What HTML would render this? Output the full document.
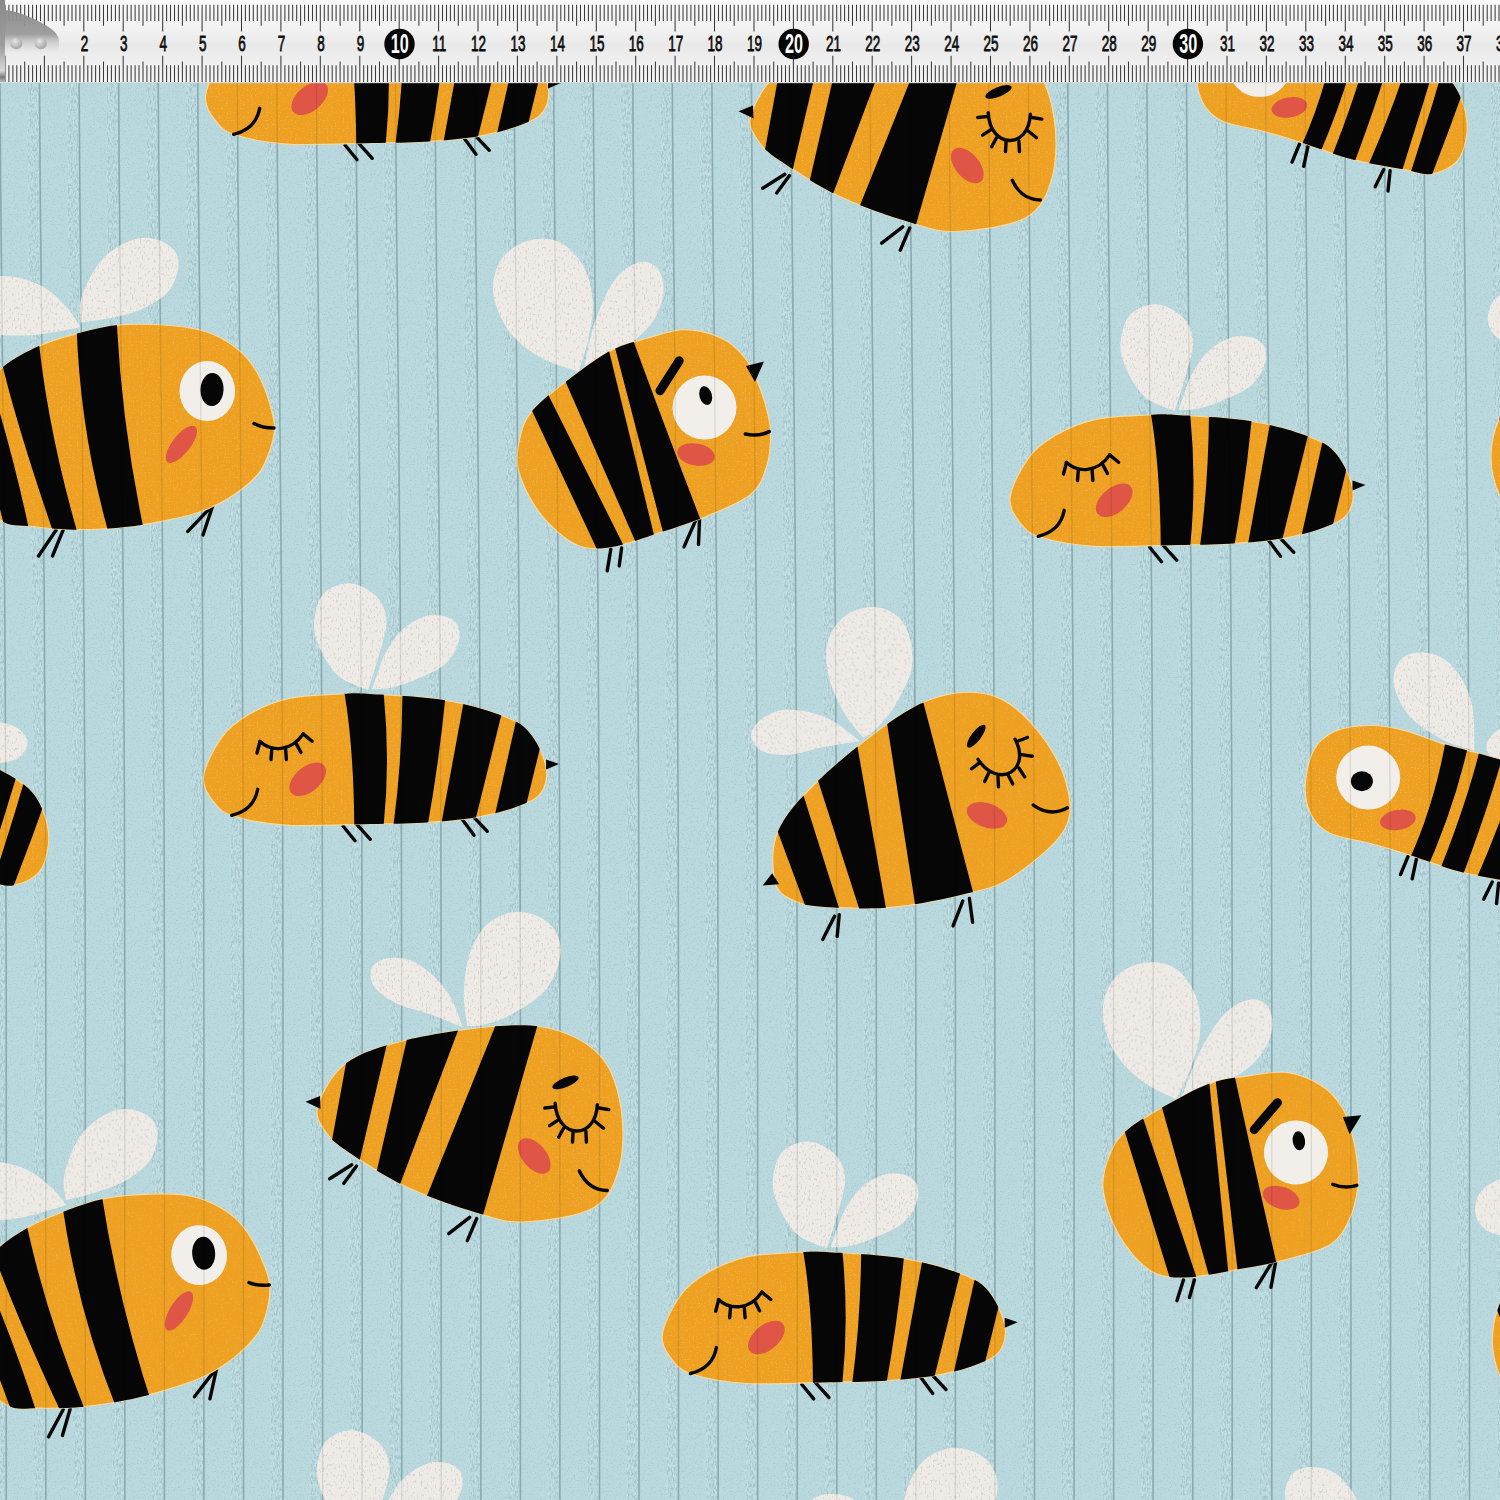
<!DOCTYPE html>
<html><head><meta charset="utf-8"><title>Bee fabric</title>
<style>html,body{margin:0;padding:0;width:1500px;height:1500px;overflow:hidden;background:#BAD9DE}
svg{display:block}</style></head><body><svg width="1500" height="1500" viewBox="0 0 1500 1500"><defs><filter id="spk" x="-2000" y="-2000" width="6000" height="6000" filterUnits="userSpaceOnUse"><feTurbulence type="fractalNoise" baseFrequency="0.75" numOctaves="1" seed="23" result="n"/><feColorMatrix in="n" type="matrix" values="0 0 0 0 0  0 0 0 0 0  0 0 0 0 0  0 0 0 10 -6.0" result="a"/><feComposite in="SourceGraphic" in2="a" operator="in"/></filter><filter id="spk2" x="-2000" y="-2000" width="6000" height="6000" filterUnits="userSpaceOnUse"><feTurbulence type="fractalNoise" baseFrequency="0.5 0.3" numOctaves="2" seed="31" result="n"/><feColorMatrix in="n" type="matrix" values="0 0 0 0 0  0 0 0 0 0  0 0 0 0 0  0 0 0 9 -5.4" result="a"/><feComposite in="SourceGraphic" in2="a" operator="in"/></filter><clipPath id="clip_t1"><path d="M203.7 776C205.1 765.4 214.3 747.5 221.7 737.3C229.1 727.1 237.2 721.1 248.3 714.7C259.4 708.3 272.7 702.2 288.3 698.7C303.9 695.2 328.1 694.8 341.7 694C355.3 693.2 353.1 693 370 694C386.9 695 421.1 696.3 443.3 700C465.5 703.7 488.9 710.5 503.3 716C517.8 721.5 522.9 724.8 530 733.3C537.1 741.8 544.2 756.7 546 766.7C547.8 776.7 545.6 786.6 540.7 793.3C535.8 800 527.4 802.7 516.7 806.7C506 810.7 492.3 814.6 476.7 817.3C461.1 820 441.1 821.6 423.3 822.7C405.5 823.8 392.5 823.6 370 824C347.5 824.4 311 826.6 288.3 825.3C265.6 824 246.2 820 233.7 816C221.1 812 218 807.7 213 801C208 794.3 202.2 786.6 203.7 776Z"/></clipPath><clipPath id="wclip_t1"><path d="M368 690C363.2 687.8 347.2 683.4 339.3 676.7C331.4 670 324.9 658.9 320.7 650C316.5 641.1 313.6 632.6 314 623.3C314.4 614 317.3 600.7 323.3 594C329.3 587.3 341.1 582.8 350 583.3C358.9 583.8 370.6 590.4 376.7 596.7C382.8 603 386.1 611.3 386.5 621C386.9 630.7 381.6 645 379 655C376.4 665 372.8 675.2 371 681C369.2 686.8 368.5 688.5 368 690Z"/><path d="M372 689C373 686.2 375.7 678.2 378 672C380.3 665.8 381.8 659.2 386 652C390.2 644.8 396 634.8 403.3 628.7C410.6 622.6 421.6 616.6 430 615.3C438.4 614 449.1 616.7 454 620.7C458.9 624.7 460.6 632.2 459.3 639.3C458 646.4 453.1 656.6 446 663.3C438.9 670 426 675.2 416.7 679.3C407.4 683.4 397.4 686.4 390 688C382.6 689.6 375 688.8 372 689Z"/></clipPath><g id="t1"><path d="M368 690C363.2 687.8 347.2 683.4 339.3 676.7C331.4 670 324.9 658.9 320.7 650C316.5 641.1 313.6 632.6 314 623.3C314.4 614 317.3 600.7 323.3 594C329.3 587.3 341.1 582.8 350 583.3C358.9 583.8 370.6 590.4 376.7 596.7C382.8 603 386.1 611.3 386.5 621C386.9 630.7 381.6 645 379 655C376.4 665 372.8 675.2 371 681C369.2 686.8 368.5 688.5 368 690Z" fill="#EEEAE6"/><path d="M372 689C373 686.2 375.7 678.2 378 672C380.3 665.8 381.8 659.2 386 652C390.2 644.8 396 634.8 403.3 628.7C410.6 622.6 421.6 616.6 430 615.3C438.4 614 449.1 616.7 454 620.7C458.9 624.7 460.6 632.2 459.3 639.3C458 646.4 453.1 656.6 446 663.3C438.9 670 426 675.2 416.7 679.3C407.4 683.4 397.4 686.4 390 688C382.6 689.6 375 688.8 372 689Z" fill="#EEEAE6"/><g clip-path="url(#wclip_t1)"><rect x="-2000" y="-2000" width="6000" height="6000" fill="#a09a96" filter="url(#spk2)" opacity="0.25"/></g><path d="M343 826 L355 840.7M357 824.7 L370.3 839.3M460.7 817.3 L474 835.3M472.7 816 L487.3 831.3" stroke="#070606" stroke-width="3.4" stroke-linecap="round" fill="none"/><path d="M203.7 776C205.1 765.4 214.3 747.5 221.7 737.3C229.1 727.1 237.2 721.1 248.3 714.7C259.4 708.3 272.7 702.2 288.3 698.7C303.9 695.2 328.1 694.8 341.7 694C355.3 693.2 353.1 693 370 694C386.9 695 421.1 696.3 443.3 700C465.5 703.7 488.9 710.5 503.3 716C517.8 721.5 522.9 724.8 530 733.3C537.1 741.8 544.2 756.7 546 766.7C547.8 776.7 545.6 786.6 540.7 793.3C535.8 800 527.4 802.7 516.7 806.7C506 810.7 492.3 814.6 476.7 817.3C461.1 820 441.1 821.6 423.3 822.7C405.5 823.8 392.5 823.6 370 824C347.5 824.4 311 826.6 288.3 825.3C265.6 824 246.2 820 233.7 816C221.1 812 218 807.7 213 801C208 794.3 202.2 786.6 203.7 776Z" fill="#EDA021" stroke="#f6d9a0" stroke-width="1.2"/><path d="M546 759.5 L559 764 L546 769.5 Z" fill="#070606"/><g clip-path="url(#clip_t1)"><rect x="-2000" y="-2000" width="6000" height="6000" fill="#ffe0a0" filter="url(#spk)" opacity="0.22"/><path d="M339.7 669.1Q355 735 354.3 848.9L381 847.7Q393 761.3 381 669.7Z" fill="#070606"/><path d="M402.4 669.8Q403.6 761.3 390.3 847.6L423.9 846.1Q440.4 759.4 447.4 675.2Z" fill="#070606"/><path d="M467.8 679.4L437.5 844.6L470.7 839L507.3 691Z" fill="#070606"/><path d="M520.8 699.6L489.8 837.7L521.4 824.3L546.6 721Z" fill="#070606"/></g><path d="M259.8 741.3 C271 752 291 752 303.2 733.9" stroke="#070606" stroke-width="3.4" fill="none" stroke-linecap="round"/><path d="M259.8 742.3 L257 753M271.9 748 L271 759.5M285.5 748.5 L286.4 759.5M296.7 744.4 L300.9 752.5M303.2 733.9 L312.1 741.3" stroke="#070606" stroke-width="3.4" stroke-linecap="round" fill="none"/><ellipse cx="307.7" cy="779.3" rx="21.5" ry="12.5" transform="rotate(-40 307.7 779.3)" fill="#DF5546"/><path d="M257.7 789.3 Q254 810 231.7 815.3" stroke="#070606" stroke-width="3.4" fill="none" stroke-linecap="round"/></g><clipPath id="clip_t2"><path d="M318 1105.3C314.5 1116.6 319.9 1123.2 325 1131C330.1 1138.8 334.7 1142.7 348.3 1152C361.9 1161.3 385.3 1176.9 406.7 1187C428.1 1197.1 457.3 1206.9 476.7 1212.7C496.1 1218.5 503.9 1222.8 523.3 1222C542.7 1221.2 577.3 1217 593.3 1208C609.2 1199 614.3 1184.6 619 1168.3C623.7 1152 624 1128.3 621.3 1110C618.6 1091.7 613.2 1071.9 602.7 1058.7C592.2 1045.5 575.4 1036.2 558.3 1030.7C541.2 1025.2 525.3 1024.5 500 1026C474.7 1027.5 432.4 1033.8 406.7 1040C381 1046.2 360.8 1052.4 346 1063.3C331.2 1074.2 321.5 1094 318 1105.3Z"/></clipPath><clipPath id="wclip_t2"><path d="M462.7 1027.2C457.2 1025 441.3 1018.4 430 1014.3C418.7 1010.2 404.3 1007.4 395 1002.7C385.7 998 377.9 992.1 374 986.3C370.1 980.5 369.4 972.4 371.7 967.7C374 963 381.4 959.5 388 958.3C394.6 957.1 403.5 957.6 411.3 960.7C419.1 963.8 428.1 970.8 434.7 977C441.3 983.2 446.3 989.6 451 998C455.7 1006.4 460.8 1022.3 462.7 1027.2Z"/><path d="M467.3 1026C466.7 1020.5 463.4 1005.3 463.8 993.3C464.2 981.2 465.6 965.4 469.7 953.7C473.8 942 480.1 930.3 488.3 923.3C496.5 916.3 508.6 911.7 518.7 911.7C528.8 911.7 542 916.7 549 923.3C556 929.9 561.1 940.4 560.7 951.3C560.3 962.2 554.9 978.2 546.7 988.7C538.5 999.2 522.2 1008.3 511.7 1014.3C501.2 1020.3 491.1 1022.8 483.7 1024.8C476.3 1026.8 470 1025.8 467.3 1026Z"/></clipPath><g id="t2"><path d="M462.7 1027.2C457.2 1025 441.3 1018.4 430 1014.3C418.7 1010.2 404.3 1007.4 395 1002.7C385.7 998 377.9 992.1 374 986.3C370.1 980.5 369.4 972.4 371.7 967.7C374 963 381.4 959.5 388 958.3C394.6 957.1 403.5 957.6 411.3 960.7C419.1 963.8 428.1 970.8 434.7 977C441.3 983.2 446.3 989.6 451 998C455.7 1006.4 460.8 1022.3 462.7 1027.2Z" fill="#EEEAE6"/><path d="M467.3 1026C466.7 1020.5 463.4 1005.3 463.8 993.3C464.2 981.2 465.6 965.4 469.7 953.7C473.8 942 480.1 930.3 488.3 923.3C496.5 916.3 508.6 911.7 518.7 911.7C528.8 911.7 542 916.7 549 923.3C556 929.9 561.1 940.4 560.7 951.3C560.3 962.2 554.9 978.2 546.7 988.7C538.5 999.2 522.2 1008.3 511.7 1014.3C501.2 1020.3 491.1 1022.8 483.7 1024.8C476.3 1026.8 470 1025.8 467.3 1026Z" fill="#EEEAE6"/><g clip-path="url(#wclip_t2)"><rect x="-2000" y="-2000" width="6000" height="6000" fill="#a09a96" filter="url(#spk2)" opacity="0.25"/></g><path d="M351.8 1164.8 L329.7 1178.8M356.5 1166 L343.7 1183.5M469.7 1217.3 L448.7 1233.7M476.7 1218.5 L467.3 1240.7" stroke="#070606" stroke-width="3.4" stroke-linecap="round" fill="none"/><path d="M318 1105.3C314.5 1116.6 319.9 1123.2 325 1131C330.1 1138.8 334.7 1142.7 348.3 1152C361.9 1161.3 385.3 1176.9 406.7 1187C428.1 1197.1 457.3 1206.9 476.7 1212.7C496.1 1218.5 503.9 1222.8 523.3 1222C542.7 1221.2 577.3 1217 593.3 1208C609.2 1199 614.3 1184.6 619 1168.3C623.7 1152 624 1128.3 621.3 1110C618.6 1091.7 613.2 1071.9 602.7 1058.7C592.2 1045.5 575.4 1036.2 558.3 1030.7C541.2 1025.2 525.3 1024.5 500 1026C474.7 1027.5 432.4 1033.8 406.7 1040C381 1046.2 360.8 1052.4 346 1063.3C331.2 1074.2 321.5 1094 318 1105.3Z" fill="#EDA021" stroke="#f6d9a0" stroke-width="1.2"/><path d="M320 1096 L305.5 1101.8 L320.5 1109 Z" fill="#070606"/><g clip-path="url(#clip_t2)"><rect x="-2000" y="-2000" width="6000" height="6000" fill="#ffe0a0" filter="url(#spk)" opacity="0.22"/><path d="M350.5 1038.7L327.5 1164.9L354.3 1183.3L391.4 1025Z" fill="#070606"/><path d="M412.3 1015.6L370.7 1197.4L390.9 1208.4L466.8 1007.3Z" fill="#070606"/><path d="M504.6 1002.8L418.4 1217.2L476.8 1236.7L544.2 1002Z" fill="#070606"/></g><ellipse cx="565.5" cy="1082.4" rx="14" ry="4.8" transform="rotate(-22 565.5 1082.4)" fill="#070606"/><path d="M555.2 1103.2 C557 1140 596 1140 597.3 1104.8" stroke="#070606" stroke-width="3.4" fill="none" stroke-linecap="round"/><path d="M544.8 1108 L554.9 1106.9M549.6 1125.6 L557.6 1120.3M558.7 1137.3 L563.5 1128.3M572.5 1142.1 L573.1 1132M586.4 1142.1 L585.9 1131.5M603.5 1128.3 L594.9 1121.3M608.8 1109.6 L599.2 1108" stroke="#070606" stroke-width="3.4" stroke-linecap="round" fill="none"/><ellipse cx="534.3" cy="1156" rx="21" ry="12" transform="rotate(50 534.3 1156)" fill="#DF5546"/><path d="M579.3 1170.7 Q588 1190 607.3 1190.5" stroke="#070606" stroke-width="3.4" fill="none" stroke-linecap="round"/></g><clipPath id="clip_t4"><path d="M648 338C660 334.6 671.8 329.6 684 329.6C696.2 329.6 710.8 333.3 721 338C731.2 342.7 738.6 349.9 745 358C751.4 366.1 755.7 377.2 759.5 386.7C763.3 396.1 766.1 406.6 768 414.7C769.9 422.8 770.9 426.6 770.7 435C770.5 443.4 770.2 455.5 767 465.3C763.8 475.1 761.1 485.6 751.3 494C741.5 502.4 723.2 509.3 708 515.7C692.8 522.1 676 527.3 660 532.5C644 537.7 626 544.9 612 546.9C598 548.9 588 550.1 576 544.5C564 538.9 549.6 525.7 540 513.3C530.4 500.9 521.6 483.2 518.4 470C515.2 456.8 518 444.4 520.8 434C523.6 423.6 526 417.6 535.2 407.6C544.4 397.6 563.2 383.6 576 374C588.8 364.4 600 356 612 350C624 344 636 341.4 648 338Z"/></clipPath><clipPath id="wclip_t4"><path d="M578.4 371.6C572 369.2 551.6 364 540 357.2C528.4 350.4 516.6 341.6 508.8 330.8C501 320 494.4 304.4 493.2 292.4C492 280.4 495.8 267.4 501.6 258.8C507.4 250.2 518.4 243.6 528 240.8C537.6 238 550 237.8 559.2 242C568.4 246.2 577.6 256 583.2 266C588.8 276 592 289.6 592.8 302C593.6 314.4 590.4 328.8 588 340.4C585.6 352 580 366.4 578.4 371.6Z"/><path d="M583.2 371.6C585.2 363.2 590 336.4 595.2 321.2C600.4 306 607.2 290.2 614.4 280.4C621.6 270.6 631.2 264.4 638.4 262.4C645.6 260.4 653.4 263.4 657.6 268.4C661.8 273.4 664.4 283.6 663.6 292.4C662.8 301.2 658.6 312.4 652.8 321.2C647 330 637.6 338 628.8 345.2C620 352.4 607.6 360 600 364.4C592.4 368.8 586 370.4 583.2 371.6Z"/></clipPath><g id="t4"><path d="M578.4 371.6C572 369.2 551.6 364 540 357.2C528.4 350.4 516.6 341.6 508.8 330.8C501 320 494.4 304.4 493.2 292.4C492 280.4 495.8 267.4 501.6 258.8C507.4 250.2 518.4 243.6 528 240.8C537.6 238 550 237.8 559.2 242C568.4 246.2 577.6 256 583.2 266C588.8 276 592 289.6 592.8 302C593.6 314.4 590.4 328.8 588 340.4C585.6 352 580 366.4 578.4 371.6Z" fill="#EEEAE6"/><path d="M583.2 371.6C585.2 363.2 590 336.4 595.2 321.2C600.4 306 607.2 290.2 614.4 280.4C621.6 270.6 631.2 264.4 638.4 262.4C645.6 260.4 653.4 263.4 657.6 268.4C661.8 273.4 664.4 283.6 663.6 292.4C662.8 301.2 658.6 312.4 652.8 321.2C647 330 637.6 338 628.8 345.2C620 352.4 607.6 360 600 364.4C592.4 368.8 586 370.4 583.2 371.6Z" fill="#EEEAE6"/><g clip-path="url(#wclip_t4)"><rect x="-2000" y="-2000" width="6000" height="6000" fill="#a09a96" filter="url(#spk2)" opacity="0.25"/></g><path d="M610.8 549.3 L607.2 570.9M621.6 548 L619.2 566M697.2 516.9 L684 546.9M699.7 515.7 L698.5 544.5" stroke="#070606" stroke-width="3.4" stroke-linecap="round" fill="none"/><path d="M648 338C660 334.6 671.8 329.6 684 329.6C696.2 329.6 710.8 333.3 721 338C731.2 342.7 738.6 349.9 745 358C751.4 366.1 755.7 377.2 759.5 386.7C763.3 396.1 766.1 406.6 768 414.7C769.9 422.8 770.9 426.6 770.7 435C770.5 443.4 770.2 455.5 767 465.3C763.8 475.1 761.1 485.6 751.3 494C741.5 502.4 723.2 509.3 708 515.7C692.8 522.1 676 527.3 660 532.5C644 537.7 626 544.9 612 546.9C598 548.9 588 550.1 576 544.5C564 538.9 549.6 525.7 540 513.3C530.4 500.9 521.6 483.2 518.4 470C515.2 456.8 518 444.4 520.8 434C523.6 423.6 526 417.6 535.2 407.6C544.4 397.6 563.2 383.6 576 374C588.8 364.4 600 356 612 350C624 344 636 341.4 648 338Z" fill="#EDA021" stroke="#f6d9a0" stroke-width="1.2"/><path d="M746 366 L764 361.5 L755 382 Z" fill="#070606"/><g clip-path="url(#clip_t4)"><rect x="-2000" y="-2000" width="6000" height="6000" fill="#ffe0a0" filter="url(#spk)" opacity="0.22"/><path d="M521.1 387.5L607.3 571.4L633.8 566L537.8 373.9Z" fill="#070606"/><path d="M556.4 360.7L643.6 560.3L659.7 558.3L603.8 329.5Z" fill="#070606"/><path d="M609.3 325.8L668.7 554.2L706 534Q662.4 420.5 626 320.9Z" fill="#070606"/></g><path d="M660 390.8 L679.2 360.8" stroke="#070606" stroke-width="9" stroke-linecap="round" fill="none"/><circle cx="704.5" cy="407.6" r="32" fill="#F2EFEA"/><ellipse cx="705.7" cy="395.6" rx="6.2" ry="9.6" transform="rotate(-15 705.7 395.6)" fill="#070606"/><ellipse cx="696" cy="454.5" rx="19" ry="11" transform="rotate(10 696 454.5)" fill="#DF5546"/><path d="M745.3 434 Q758 437 769.3 431.6" stroke="#070606" stroke-width="3.4" fill="none" stroke-linecap="round"/></g><clipPath id="clip_t3"><path d="M-36 446C-36 432.8 -33 418.7 -27 406C-21 393.3 -11.2 379.7 0 369.6C11.2 359.5 26.7 351.7 40 345.6C53.3 339.5 66.7 336.3 80 332.8C93.3 329.3 106.1 326.1 120 324.8C133.9 323.5 150 324.1 163.3 325C176.6 325.9 189.6 327.3 200 330C210.4 332.7 218.2 336.3 226 341C233.8 345.7 241.2 351.5 247 358C252.8 364.5 257 371.7 261 380C265 388.3 268.8 400 271 408C273.2 416 274.7 421 274.5 428C274.3 435 272.6 442.5 270 450C267.4 457.5 265.1 465.4 259 473C252.9 480.6 243.1 488.8 233.3 495.3C223.5 501.8 211.7 507.7 200 512C188.3 516.3 175 518.6 163.3 521C151.6 523.4 143.9 525 130 526.5C116.1 528 96.3 529.7 80 529.7C63.7 529.7 45.3 528.1 32 526.5C18.7 524.9 9.8 526.9 0 520C-9.8 513.1 -21 497.3 -27 485C-33 472.7 -36 459.2 -36 446Z"/></clipPath><clipPath id="wclip_t3"><path d="M80.5 322.6C80.7 318.3 78.3 307.1 81.6 297C84.8 286.9 92.8 271 100 262C107.2 253 116.7 247 125 243C133.3 239 142.2 237.2 150 238C157.8 238.8 167.2 243.3 172 248C176.8 252.7 179.2 258.7 178.5 266C177.8 273.3 174.4 284.7 168 292C161.6 299.3 149.7 305.7 140 310C130.3 314.3 119.9 315.9 110 318C100.1 320.1 85.4 321.8 80.5 322.6Z"/><path d="M80.5 327.3C78.4 324.2 73.6 315.2 67.7 308.6C61.8 302.1 53.8 293.3 45 288C36.2 282.7 25 278.7 15 277C5 275.3 -6.7 275.5 -15 278C-23.3 280.5 -31.2 285.8 -35 292C-38.8 298.2 -40.5 308.3 -38 315C-35.5 321.7 -30.2 328.6 -20 332C-9.8 335.4 10.8 335.5 23.3 335.5C35.8 335.5 45.5 333.4 55 332C64.5 330.6 76.2 328.1 80.5 327.3Z"/></clipPath><g id="t3"><path d="M80.5 322.6C80.7 318.3 78.3 307.1 81.6 297C84.8 286.9 92.8 271 100 262C107.2 253 116.7 247 125 243C133.3 239 142.2 237.2 150 238C157.8 238.8 167.2 243.3 172 248C176.8 252.7 179.2 258.7 178.5 266C177.8 273.3 174.4 284.7 168 292C161.6 299.3 149.7 305.7 140 310C130.3 314.3 119.9 315.9 110 318C100.1 320.1 85.4 321.8 80.5 322.6Z" fill="#EEEAE6"/><path d="M80.5 327.3C78.4 324.2 73.6 315.2 67.7 308.6C61.8 302.1 53.8 293.3 45 288C36.2 282.7 25 278.7 15 277C5 275.3 -6.7 275.5 -15 278C-23.3 280.5 -31.2 285.8 -35 292C-38.8 298.2 -40.5 308.3 -38 315C-35.5 321.7 -30.2 328.6 -20 332C-9.8 335.4 10.8 335.5 23.3 335.5C35.8 335.5 45.5 333.4 55 332C64.5 330.6 76.2 328.1 80.5 327.3Z" fill="#EEEAE6"/><g clip-path="url(#wclip_t3)"><rect x="-2000" y="-2000" width="6000" height="6000" fill="#a09a96" filter="url(#spk2)" opacity="0.25"/></g><path d="M56 530.3 L38.5 556M63 530.3 L52.5 556M211 507 L187.8 531.4M213.5 503.4 L203 535" stroke="#070606" stroke-width="3.4" stroke-linecap="round" fill="none"/><path d="M-36 446C-36 432.8 -33 418.7 -27 406C-21 393.3 -11.2 379.7 0 369.6C11.2 359.5 26.7 351.7 40 345.6C53.3 339.5 66.7 336.3 80 332.8C93.3 329.3 106.1 326.1 120 324.8C133.9 323.5 150 324.1 163.3 325C176.6 325.9 189.6 327.3 200 330C210.4 332.7 218.2 336.3 226 341C233.8 345.7 241.2 351.5 247 358C252.8 364.5 257 371.7 261 380C265 388.3 268.8 400 271 408C273.2 416 274.7 421 274.5 428C274.3 435 272.6 442.5 270 450C267.4 457.5 265.1 465.4 259 473C252.9 480.6 243.1 488.8 233.3 495.3C223.5 501.8 211.7 507.7 200 512C188.3 516.3 175 518.6 163.3 521C151.6 523.4 143.9 525 130 526.5C116.1 528 96.3 529.7 80 529.7C63.7 529.7 45.3 528.1 32 526.5C18.7 524.9 9.8 526.9 0 520C-9.8 513.1 -21 497.3 -27 485C-33 472.7 -36 459.2 -36 446Z" fill="#EDA021" stroke="#f6d9a0" stroke-width="1.2"/><g clip-path="url(#clip_t3)"><rect x="-2000" y="-2000" width="6000" height="6000" fill="#ffe0a0" filter="url(#spk)" opacity="0.22"/><path d="M-35.5 380.9Q-9.5 467.5 10.5 552.1L33.4 552.2Q18.4 471 -14.2 365.8Z" fill="#070606"/><path d="M-2.4 344.1Q12.8 416 60 551.9L83.3 552.5Q45.6 428 36.7 319.5Z" fill="#070606"/><path d="M76.1 308.1Q77.8 433.6 114.4 552.7L147.8 548.1Q120.2 425.9 115.8 300.2Z" fill="#070606"/></g><ellipse cx="207.3" cy="391" rx="27.8" ry="30" transform="rotate(0 207.3 391)" fill="#F2EFEA"/><ellipse cx="212" cy="389.6" rx="11.5" ry="16.5" transform="rotate(3 212 389.6)" fill="#070606"/><ellipse cx="181.4" cy="444.3" rx="22.5" ry="9" transform="rotate(-52 181.4 444.3)" fill="#DF5546"/><path d="M254 423.5 Q262 428 274 428" stroke="#070606" stroke-width="3.4" fill="none" stroke-linecap="round"/></g><clipPath id="clip_t5"><path d="M1196.7 74C1196.4 84.8 1198.8 95.2 1203 103C1207.2 110.8 1212.2 116.3 1222 121C1231.8 125.7 1248.8 127.4 1262 131C1275.2 134.6 1286.2 137.8 1301 142.5C1315.8 147.2 1333.5 154.5 1350.7 159C1367.9 163.5 1390.5 167.1 1404 169.6C1417.5 172.1 1422.8 175.3 1431.7 173.9C1440.6 172.5 1451.4 167.8 1457.3 161C1463.2 154.2 1465.8 142.5 1466.9 133.3C1468 124.1 1466.5 114.5 1463.7 105.6C1460.9 96.7 1456.5 87.3 1450 80C1443.5 72.7 1434.8 67.5 1425 62C1415.2 56.5 1406.8 52.3 1391.5 47.1C1376.2 41.9 1349.2 35.7 1333.5 30.9C1317.8 26.1 1309.4 21.3 1297.5 18.3C1285.6 15.3 1273.9 12.9 1262 13C1250.1 13.1 1235.5 14.8 1226 19C1216.5 23.2 1209.9 28.8 1205 38C1200.1 47.2 1197 63.2 1196.7 74Z"/></clipPath><clipPath id="wclip_t5"><path d="M1366 38C1360.8 36.2 1345.5 33.1 1334.8 27.5C1324 21.9 1309.7 13.3 1301.5 4.2C1293.3 -4.9 1287.4 -18 1285.5 -27C1283.6 -36 1286.6 -44.6 1290 -50C1293.4 -55.4 1299.1 -58.5 1306 -59.5C1312.9 -60.5 1323.8 -59.8 1331.5 -55.8C1339.2 -51.8 1346.6 -44.3 1352 -35.8C1357.4 -27.3 1361.7 -17.3 1364 -5C1366.3 7.3 1365.7 30.8 1366 38Z"/><path d="M1378 32C1379 26.8 1385.3 19.5 1392 16C1398.7 12.5 1410.3 10.7 1418 11C1425.7 11.3 1433.3 14.5 1438 18C1442.7 21.5 1446.3 27.2 1446 32C1445.7 36.8 1442 43.7 1436 47C1430 50.3 1418.3 52 1410 52C1401.7 52 1391.3 50.3 1386 47C1380.7 43.7 1377 37.2 1378 32Z"/></clipPath><g id="t5"><path d="M1366 38C1360.8 36.2 1345.5 33.1 1334.8 27.5C1324 21.9 1309.7 13.3 1301.5 4.2C1293.3 -4.9 1287.4 -18 1285.5 -27C1283.6 -36 1286.6 -44.6 1290 -50C1293.4 -55.4 1299.1 -58.5 1306 -59.5C1312.9 -60.5 1323.8 -59.8 1331.5 -55.8C1339.2 -51.8 1346.6 -44.3 1352 -35.8C1357.4 -27.3 1361.7 -17.3 1364 -5C1366.3 7.3 1365.7 30.8 1366 38Z" fill="#EEEAE6"/><path d="M1378 32C1379 26.8 1385.3 19.5 1392 16C1398.7 12.5 1410.3 10.7 1418 11C1425.7 11.3 1433.3 14.5 1438 18C1442.7 21.5 1446.3 27.2 1446 32C1445.7 36.8 1442 43.7 1436 47C1430 50.3 1418.3 52 1410 52C1401.7 52 1391.3 50.3 1386 47C1380.7 43.7 1377 37.2 1378 32Z" fill="#EEEAE6"/><g clip-path="url(#wclip_t5)"><rect x="-2000" y="-2000" width="6000" height="6000" fill="#a09a96" filter="url(#spk2)" opacity="0.25"/></g><path d="M1299.5 144 L1292 162.1M1308 146.1 L1303.7 166.4M1383.7 169.6 L1375.2 186.7M1390.1 170.7 L1388 191" stroke="#070606" stroke-width="3.4" stroke-linecap="round" fill="none"/><path d="M1196.7 74C1196.4 84.8 1198.8 95.2 1203 103C1207.2 110.8 1212.2 116.3 1222 121C1231.8 125.7 1248.8 127.4 1262 131C1275.2 134.6 1286.2 137.8 1301 142.5C1315.8 147.2 1333.5 154.5 1350.7 159C1367.9 163.5 1390.5 167.1 1404 169.6C1417.5 172.1 1422.8 175.3 1431.7 173.9C1440.6 172.5 1451.4 167.8 1457.3 161C1463.2 154.2 1465.8 142.5 1466.9 133.3C1468 124.1 1466.5 114.5 1463.7 105.6C1460.9 96.7 1456.5 87.3 1450 80C1443.5 72.7 1434.8 67.5 1425 62C1415.2 56.5 1406.8 52.3 1391.5 47.1C1376.2 41.9 1349.2 35.7 1333.5 30.9C1317.8 26.1 1309.4 21.3 1297.5 18.3C1285.6 15.3 1273.9 12.9 1262 13C1250.1 13.1 1235.5 14.8 1226 19C1216.5 23.2 1209.9 28.8 1205 38C1200.1 47.2 1197 63.2 1196.7 74Z" fill="#EDA021" stroke="#f6d9a0" stroke-width="1.2"/><g clip-path="url(#clip_t5)"><rect x="-2000" y="-2000" width="6000" height="6000" fill="#ffe0a0" filter="url(#spk)" opacity="0.22"/><path d="M1340.7 7Q1327.6 96.6 1291.7 165.8L1311.7 171.6Q1349.5 89.7 1363.3 15Z" fill="#070606"/><path d="M1375.3 19.8Q1361.5 84.9 1323.7 176.4L1346.5 183.6Q1386.1 79.5 1399.3 23.4Z" fill="#070606"/><path d="M1419.2 26.6Q1395.3 106.6 1358.9 186.6L1394.5 194.6Q1421.4 110.5 1446.6 26.1Z" fill="#070606"/><path d="M1453.9 31.1Q1430.7 113.5 1403 195.6L1423.1 197.4Q1453 122 1478.6 46.5Z" fill="#070606"/></g><circle cx="1259.7" cy="65.1" r="32" fill="#F2EFEA"/><ellipse cx="1253.4" cy="68.7" rx="11" ry="10" transform="rotate(0 1253.4 68.7)" fill="#070606"/><ellipse cx="1289.4" cy="107.4" rx="18" ry="10" transform="rotate(-10 1289.4 107.4)" fill="#DF5546"/></g></defs><rect x="0" y="0" width="1500" height="1500" fill="#BAD9DE"/><filter id="ribtex" x="0" y="0" width="1500" height="1500" filterUnits="userSpaceOnUse"><feTurbulence type="fractalNoise" baseFrequency="0.6 0.25" numOctaves="2" seed="7" result="n"/><feColorMatrix in="n" type="matrix" values="0 0 0 0 0  0 0 0 0 0  0 0 0 0 0  0 0 0 7 -3.2" result="a"/><feComposite in="SourceGraphic" in2="a" operator="in"/></filter><filter id="ribtex2" x="0" y="0" width="1500" height="1500" filterUnits="userSpaceOnUse"><feTurbulence type="fractalNoise" baseFrequency="0.6 0.25" numOctaves="2" seed="19" result="n"/><feColorMatrix in="n" type="matrix" values="0 0 0 0 0  0 0 0 0 0  0 0 0 0 0  0 0 0 7 -3.3" result="a"/><feComposite in="SourceGraphic" in2="a" operator="in"/></filter><filter id="bgtex" x="0" y="0" width="1500" height="1500" filterUnits="userSpaceOnUse"><feTurbulence type="fractalNoise" baseFrequency="0.7" numOctaves="2" seed="11" result="n"/><feColorMatrix in="n" type="matrix" values="0 0 0 0 0  0 0 0 0 0  0 0 0 0 0  0 0 0 9 -5.2" result="a"/><feComposite in="SourceGraphic" in2="a" operator="in"/></filter><rect x="0" y="83" width="1500" height="1417" fill="#98babf" filter="url(#bgtex)" opacity="0.3"/><g filter="url(#ribtex)" opacity="0.42"><path d="M-46 83L-45.3 190L-43.1 400L-41.3 600L-40.2 800L-39.8 1000L-39.8 1500M-6.5 83L-5.8 190L-3.6 400L-1.8 600L-0.7 800L-0.3 1000L-0.3 1500M33 83L33.8 190L35.9 400L37.8 600L38.8 800L39.2 1000L39.2 1500M72.6 83L73.3 190L75.5 400L77.3 600L78.4 800L78.8 1000L78.8 1500M112.1 83L112.8 190L115 400L116.8 600L117.9 800L118.3 1000L118.3 1500M151.7 83L152.4 190L154.6 400L156.4 600L157.5 800L157.9 1000L157.9 1500M191.2 83L191.9 190L194.2 400L195.9 600L197.1 800L197.4 1000L197.4 1500M230.8 83L231.5 190L233.7 400L235.5 600L236.6 800L237 1000L237 1500M270.3 83L271 190L273.2 400L275 600L276.1 800L276.5 1000L276.5 1500M309.9 83L310.6 190L312.8 400L314.6 600L315.7 800L316.1 1000L316.1 1500M349.4 83L350.1 190L352.3 400L354.1 600L355.2 800L355.6 1000L355.6 1500M389 83L389.7 190L391.9 400L393.7 600L394.8 800L395.2 1000L395.2 1500M428.5 83L429.2 190L431.4 400L433.2 600L434.3 800L434.7 1000L434.7 1500M468.1 83L468.8 190L471 400L472.8 600L473.9 800L474.3 1000L474.3 1500M507.6 83L508.4 190L510.5 400L512.4 600L513.4 800L513.9 1000L513.9 1500M547.2 83L547.9 190L550.1 400L551.9 600L553 800L553.4 1000L553.4 1500M586.8 83L587.5 190L589.6 400L591.5 600L592.5 800L593 1000L593 1500M626.3 83L627 190L629.2 400L631 600L632.1 800L632.5 1000L632.5 1500M665.8 83L666.5 190L668.7 400L670.5 600L671.6 800L672 1000L672 1500M705.4 83L706.1 190L708.3 400L710.1 600L711.2 800L711.6 1000L711.6 1500M744.9 83L745.6 190L747.8 400L749.6 600L750.7 800L751.1 1000L751.1 1500M784.5 83L785.2 190L787.4 400L789.2 600L790.3 800L790.7 1000L790.7 1500M824 83L824.8 190L826.9 400L828.8 600L829.8 800L830.2 1000L830.2 1500M863.6 83L864.3 190L866.5 400L868.3 600L869.4 800L869.8 1000L869.8 1500M903.1 83L903.9 190L906 400L907.9 600L908.9 800L909.4 1000L909.4 1500M942.7 83L943.4 190L945.6 400L947.4 600L948.5 800L948.9 1000L948.9 1500M982.2 83L982.9 190L985.1 400L986.9 600L988 800L988.4 1000L988.4 1500M1021.8 83L1022.5 190L1024.7 400L1026.5 600L1027.6 800L1028 1000L1028 1500M1061.3 83L1062 190L1064.2 400L1066 600L1067.1 800L1067.5 1000L1067.5 1500M1100.9 83L1101.6 190L1103.8 400L1105.6 600L1106.7 800L1107.1 1000L1107.1 1500M1140.4 83L1141.1 190L1143.3 400L1145.1 600L1146.2 800L1146.6 1000L1146.6 1500M1180 83L1180.7 190L1182.9 400L1184.7 600L1185.8 800L1186.2 1000L1186.2 1500M1219.5 83L1220.2 190L1222.5 400L1224.2 600L1225.3 800L1225.8 1000L1225.8 1500M1259.1 83L1259.8 190L1262 400L1263.8 600L1264.9 800L1265.3 1000L1265.3 1500M1298.6 83L1299.3 190L1301.5 400L1303.3 600L1304.4 800L1304.8 1000L1304.8 1500M1338.2 83L1338.9 190L1341.1 400L1342.9 600L1344 800L1344.4 1000L1344.4 1500M1377.8 83L1378.5 190L1380.7 400L1382.5 600L1383.5 800L1384 1000L1384 1500M1417.3 83L1418 190L1420.2 400L1422 600L1423.1 800L1423.5 1000L1423.5 1500M1456.8 83L1457.5 190L1459.8 400L1461.5 600L1462.6 800L1463 1000L1463 1500M1496.4 83L1497.1 190L1499.3 400L1501.1 600L1502.2 800L1502.6 1000L1502.6 1500" stroke="#90b3b8" stroke-width="11" fill="none"/></g><g filter="url(#ribtex2)" opacity="0.45"><path d="M-46 83L-45.3 190L-43.1 400L-41.3 600L-40.2 800L-39.8 1000L-39.8 1500M-6.5 83L-5.8 190L-3.6 400L-1.8 600L-0.7 800L-0.3 1000L-0.3 1500M33 83L33.8 190L35.9 400L37.8 600L38.8 800L39.2 1000L39.2 1500M72.6 83L73.3 190L75.5 400L77.3 600L78.4 800L78.8 1000L78.8 1500M112.1 83L112.8 190L115 400L116.8 600L117.9 800L118.3 1000L118.3 1500M151.7 83L152.4 190L154.6 400L156.4 600L157.5 800L157.9 1000L157.9 1500M191.2 83L191.9 190L194.2 400L195.9 600L197.1 800L197.4 1000L197.4 1500M230.8 83L231.5 190L233.7 400L235.5 600L236.6 800L237 1000L237 1500M270.3 83L271 190L273.2 400L275 600L276.1 800L276.5 1000L276.5 1500M309.9 83L310.6 190L312.8 400L314.6 600L315.7 800L316.1 1000L316.1 1500M349.4 83L350.1 190L352.3 400L354.1 600L355.2 800L355.6 1000L355.6 1500M389 83L389.7 190L391.9 400L393.7 600L394.8 800L395.2 1000L395.2 1500M428.5 83L429.2 190L431.4 400L433.2 600L434.3 800L434.7 1000L434.7 1500M468.1 83L468.8 190L471 400L472.8 600L473.9 800L474.3 1000L474.3 1500M507.6 83L508.4 190L510.5 400L512.4 600L513.4 800L513.9 1000L513.9 1500M547.2 83L547.9 190L550.1 400L551.9 600L553 800L553.4 1000L553.4 1500M586.8 83L587.5 190L589.6 400L591.5 600L592.5 800L593 1000L593 1500M626.3 83L627 190L629.2 400L631 600L632.1 800L632.5 1000L632.5 1500M665.8 83L666.5 190L668.7 400L670.5 600L671.6 800L672 1000L672 1500M705.4 83L706.1 190L708.3 400L710.1 600L711.2 800L711.6 1000L711.6 1500M744.9 83L745.6 190L747.8 400L749.6 600L750.7 800L751.1 1000L751.1 1500M784.5 83L785.2 190L787.4 400L789.2 600L790.3 800L790.7 1000L790.7 1500M824 83L824.8 190L826.9 400L828.8 600L829.8 800L830.2 1000L830.2 1500M863.6 83L864.3 190L866.5 400L868.3 600L869.4 800L869.8 1000L869.8 1500M903.1 83L903.9 190L906 400L907.9 600L908.9 800L909.4 1000L909.4 1500M942.7 83L943.4 190L945.6 400L947.4 600L948.5 800L948.9 1000L948.9 1500M982.2 83L982.9 190L985.1 400L986.9 600L988 800L988.4 1000L988.4 1500M1021.8 83L1022.5 190L1024.7 400L1026.5 600L1027.6 800L1028 1000L1028 1500M1061.3 83L1062 190L1064.2 400L1066 600L1067.1 800L1067.5 1000L1067.5 1500M1100.9 83L1101.6 190L1103.8 400L1105.6 600L1106.7 800L1107.1 1000L1107.1 1500M1140.4 83L1141.1 190L1143.3 400L1145.1 600L1146.2 800L1146.6 1000L1146.6 1500M1180 83L1180.7 190L1182.9 400L1184.7 600L1185.8 800L1186.2 1000L1186.2 1500M1219.5 83L1220.2 190L1222.5 400L1224.2 600L1225.3 800L1225.8 1000L1225.8 1500M1259.1 83L1259.8 190L1262 400L1263.8 600L1264.9 800L1265.3 1000L1265.3 1500M1298.6 83L1299.3 190L1301.5 400L1303.3 600L1304.4 800L1304.8 1000L1304.8 1500M1338.2 83L1338.9 190L1341.1 400L1342.9 600L1344 800L1344.4 1000L1344.4 1500M1377.8 83L1378.5 190L1380.7 400L1382.5 600L1383.5 800L1384 1000L1384 1500M1417.3 83L1418 190L1420.2 400L1422 600L1423.1 800L1423.5 1000L1423.5 1500M1456.8 83L1457.5 190L1459.8 400L1461.5 600L1462.6 800L1463 1000L1463 1500M1496.4 83L1497.1 190L1499.3 400L1501.1 600L1502.2 800L1502.6 1000L1502.6 1500" stroke="#d3e9ec" stroke-width="12" fill="none"/></g><path d="M-39.5 83L-38.8 190L-36.6 400L-34.8 600L-33.8 800L-33.3 1000L-33.3 1500M0 83L0.7 190L2.9 400L4.7 600L5.8 800L6.2 1000L6.2 1500M39.5 83L40.2 190L42.4 400L44.2 600L45.3 800L45.8 1000L45.8 1500M79.1 83L79.8 190L82 400L83.8 600L84.9 800L85.3 1000L85.3 1500M118.6 83L119.3 190L121.5 400L123.3 600L124.4 800L124.8 1000L124.8 1500M158.2 83L158.9 190L161.1 400L162.9 600L164 800L164.4 1000L164.4 1500M197.8 83L198.4 190L200.7 400L202.4 600L203.6 800L203.9 1000L203.9 1500M237.3 83L238 190L240.2 400L242 600L243.1 800L243.5 1000L243.5 1500M276.8 83L277.5 190L279.7 400L281.5 600L282.6 800L283 1000L283 1500M316.4 83L317.1 190L319.3 400L321.1 600L322.2 800L322.6 1000L322.6 1500M355.9 83L356.6 190L358.8 400L360.6 600L361.8 800L362.1 1000L362.1 1500M395.5 83L396.2 190L398.4 400L400.2 600L401.3 800L401.7 1000L401.7 1500M435 83L435.7 190L437.9 400L439.7 600L440.8 800L441.2 1000L441.2 1500M474.6 83L475.3 190L477.5 400L479.3 600L480.4 800L480.8 1000L480.8 1500M514.1 83L514.9 190L517 400L518.9 600L519.9 800L520.4 1000L520.4 1500M553.7 83L554.4 190L556.6 400L558.4 600L559.5 800L559.9 1000L559.9 1500M593.2 83L594 190L596.1 400L598 600L599 800L599.5 1000L599.5 1500M632.8 83L633.5 190L635.7 400L637.5 600L638.6 800L639 1000L639 1500M672.3 83L673 190L675.2 400L677 600L678.1 800L678.5 1000L678.5 1500M711.9 83L712.6 190L714.8 400L716.6 600L717.7 800L718.1 1000L718.1 1500M751.4 83L752.1 190L754.3 400L756.1 600L757.2 800L757.6 1000L757.6 1500M791 83L791.7 190L793.9 400L795.7 600L796.8 800L797.2 1000L797.2 1500M830.5 83L831.2 190L833.4 400L835.2 600L836.3 800L836.8 1000L836.8 1500M870.1 83L870.8 190L873 400L874.8 600L875.9 800L876.3 1000L876.3 1500M909.6 83L910.4 190L912.5 400L914.4 600L915.4 800L915.9 1000L915.9 1500M949.2 83L949.9 190L952.1 400L953.9 600L955 800L955.4 1000L955.4 1500M988.7 83L989.4 190L991.6 400L993.4 600L994.5 800L994.9 1000L994.9 1500M1028.3 83L1029 190L1031.2 400L1033 600L1034.1 800L1034.5 1000L1034.5 1500M1067.8 83L1068.5 190L1070.8 400L1072.5 600L1073.6 800L1074 1000L1074 1500M1107.4 83L1108.1 190L1110.3 400L1112.1 600L1113.2 800L1113.6 1000L1113.6 1500M1146.9 83L1147.6 190L1149.8 400L1151.6 600L1152.7 800L1153.1 1000L1153.1 1500M1186.5 83L1187.2 190L1189.4 400L1191.2 600L1192.3 800L1192.7 1000L1192.7 1500M1226 83L1226.8 190L1229 400L1230.8 600L1231.8 800L1232.2 1000L1232.2 1500M1265.6 83L1266.3 190L1268.5 400L1270.3 600L1271.4 800L1271.8 1000L1271.8 1500M1305.1 83L1305.8 190L1308 400L1309.8 600L1310.9 800L1311.3 1000L1311.3 1500M1344.7 83L1345.4 190L1347.6 400L1349.4 600L1350.5 800L1350.9 1000L1350.9 1500M1384.2 83L1385 190L1387.2 400L1389 600L1390 800L1390.5 1000L1390.5 1500M1423.8 83L1424.5 190L1426.7 400L1428.5 600L1429.6 800L1430 1000L1430 1500M1463.3 83L1464 190L1466.2 400L1468 600L1469.1 800L1469.5 1000L1469.5 1500M1502.9 83L1503.6 190L1505.8 400L1507.6 600L1508.7 800L1509.1 1000L1509.1 1500" stroke="#8cb0b6" stroke-width="1.7" fill="none" opacity="0.75"/><use href="#t1"/><use href="#t1" transform="translate(806.5 -279)"/><use href="#t1" transform="translate(2 -681)"/><use href="#t1" transform="translate(458.7 558.2)"/><use href="#t1" transform="translate(3 847)"/><use href="#t2"/><use href="#t2" transform="translate(433 -990.5)"/><use href="#t2" transform="translate(763.3 885.2) rotate(-30.7) translate(-306.3 -1101.8)"/><use href="#t2" transform="translate(437 536)"/><use href="#t4"/><use href="#t4" transform="translate(1296 1152.5) rotate(8) translate(-704.5 -407.6)"/><use href="#t3"/><use href="#t3" transform="translate(1527 11)"/><use href="#t3" transform="translate(199.5 1255.6) rotate(-6) translate(-207.6 -391.5)"/><use href="#t3" transform="translate(1729.5 1270) rotate(-6) translate(-207.6 -391.5)"/><use href="#t5"/><use href="#t5" transform="translate(108.5 712.5)"/><use href="#t5" transform="translate(-1418.5 711.5)"/><use href="#t5" transform="translate(0 1527)"/><g opacity="0.18"><path d="M-39.5 83L-38.8 190L-36.6 400L-34.8 600L-33.8 800L-33.3 1000L-33.3 1500M0 83L0.7 190L2.9 400L4.7 600L5.8 800L6.2 1000L6.2 1500M39.5 83L40.2 190L42.4 400L44.2 600L45.3 800L45.8 1000L45.8 1500M79.1 83L79.8 190L82 400L83.8 600L84.9 800L85.3 1000L85.3 1500M118.6 83L119.3 190L121.5 400L123.3 600L124.4 800L124.8 1000L124.8 1500M158.2 83L158.9 190L161.1 400L162.9 600L164 800L164.4 1000L164.4 1500M197.8 83L198.4 190L200.7 400L202.4 600L203.6 800L203.9 1000L203.9 1500M237.3 83L238 190L240.2 400L242 600L243.1 800L243.5 1000L243.5 1500M276.8 83L277.5 190L279.7 400L281.5 600L282.6 800L283 1000L283 1500M316.4 83L317.1 190L319.3 400L321.1 600L322.2 800L322.6 1000L322.6 1500M355.9 83L356.6 190L358.8 400L360.6 600L361.8 800L362.1 1000L362.1 1500M395.5 83L396.2 190L398.4 400L400.2 600L401.3 800L401.7 1000L401.7 1500M435 83L435.7 190L437.9 400L439.7 600L440.8 800L441.2 1000L441.2 1500M474.6 83L475.3 190L477.5 400L479.3 600L480.4 800L480.8 1000L480.8 1500M514.1 83L514.9 190L517 400L518.9 600L519.9 800L520.4 1000L520.4 1500M553.7 83L554.4 190L556.6 400L558.4 600L559.5 800L559.9 1000L559.9 1500M593.2 83L594 190L596.1 400L598 600L599 800L599.5 1000L599.5 1500M632.8 83L633.5 190L635.7 400L637.5 600L638.6 800L639 1000L639 1500M672.3 83L673 190L675.2 400L677 600L678.1 800L678.5 1000L678.5 1500M711.9 83L712.6 190L714.8 400L716.6 600L717.7 800L718.1 1000L718.1 1500M751.4 83L752.1 190L754.3 400L756.1 600L757.2 800L757.6 1000L757.6 1500M791 83L791.7 190L793.9 400L795.7 600L796.8 800L797.2 1000L797.2 1500M830.5 83L831.2 190L833.4 400L835.2 600L836.3 800L836.8 1000L836.8 1500M870.1 83L870.8 190L873 400L874.8 600L875.9 800L876.3 1000L876.3 1500M909.6 83L910.4 190L912.5 400L914.4 600L915.4 800L915.9 1000L915.9 1500M949.2 83L949.9 190L952.1 400L953.9 600L955 800L955.4 1000L955.4 1500M988.7 83L989.4 190L991.6 400L993.4 600L994.5 800L994.9 1000L994.9 1500M1028.3 83L1029 190L1031.2 400L1033 600L1034.1 800L1034.5 1000L1034.5 1500M1067.8 83L1068.5 190L1070.8 400L1072.5 600L1073.6 800L1074 1000L1074 1500M1107.4 83L1108.1 190L1110.3 400L1112.1 600L1113.2 800L1113.6 1000L1113.6 1500M1146.9 83L1147.6 190L1149.8 400L1151.6 600L1152.7 800L1153.1 1000L1153.1 1500M1186.5 83L1187.2 190L1189.4 400L1191.2 600L1192.3 800L1192.7 1000L1192.7 1500M1226 83L1226.8 190L1229 400L1230.8 600L1231.8 800L1232.2 1000L1232.2 1500M1265.6 83L1266.3 190L1268.5 400L1270.3 600L1271.4 800L1271.8 1000L1271.8 1500M1305.1 83L1305.8 190L1308 400L1309.8 600L1310.9 800L1311.3 1000L1311.3 1500M1344.7 83L1345.4 190L1347.6 400L1349.4 600L1350.5 800L1350.9 1000L1350.9 1500M1384.2 83L1385 190L1387.2 400L1389 600L1390 800L1390.5 1000L1390.5 1500M1423.8 83L1424.5 190L1426.7 400L1428.5 600L1429.6 800L1430 1000L1430 1500M1463.3 83L1464 190L1466.2 400L1468 600L1469.1 800L1469.5 1000L1469.5 1500M1502.9 83L1503.6 190L1505.8 400L1507.6 600L1508.7 800L1509.1 1000L1509.1 1500" stroke="#000" stroke-width="1.4" fill="none" opacity="0.5"/></g><filter id="spk" x="0" y="0" width="1500" height="1500" filterUnits="userSpaceOnUse"><feTurbulence type="fractalNoise" baseFrequency="0.8" numOctaves="1" seed="23" result="n"/><feColorMatrix in="n" type="matrix" values="0 0 0 0 0  0 0 0 0 0  0 0 0 0 0  0 0 0 10 -6.2" result="a"/><feComposite in="SourceGraphic" in2="a" operator="in"/></filter><defs><linearGradient id="rg" x1="0" y1="0" x2="0" y2="1"><stop offset="0" stop-color="#fafafa"/><stop offset="0.35" stop-color="#f2f2f2"/><stop offset="0.55" stop-color="#e9e9e9"/><stop offset="1" stop-color="#f7f7f7"/></linearGradient><linearGradient id="hook" x1="0" y1="0" x2="0" y2="1"><stop offset="0" stop-color="#8f8f8f"/><stop offset="1" stop-color="#c9c9c9"/></linearGradient><radialGradient id="riv" cx="0.4" cy="0.35" r="0.7"><stop offset="0" stop-color="#e6e6e6"/><stop offset="1" stop-color="#a0a0a0"/></radialGradient></defs><rect x="0" y="0" width="1500" height="83" fill="url(#rg)"/><path d="M5 4.8V31.5M5 55.7V83M8.9 4.8V21M8.9 65.3V83M12.9 4.8V21M12.9 65.3V83M16.8 4.8V21M16.8 65.3V83M20.7 4.8V21M20.7 65.3V83M24.7 4.8V25.8M24.7 61.6V83M28.6 4.8V21M28.6 65.3V83M32.6 4.8V21M32.6 65.3V83M36.5 4.8V21M36.5 65.3V83M40.5 4.8V21M40.5 65.3V83M44.4 4.8V31.5M44.4 55.7V83M48.3 4.8V21M48.3 65.3V83M52.3 4.8V21M52.3 65.3V83M56.2 4.8V21M56.2 65.3V83M60.2 4.8V21M60.2 65.3V83M64.1 4.8V25.8M64.1 61.6V83M68.1 4.8V21M68.1 65.3V83M72 4.8V21M72 65.3V83M75.9 4.8V21M75.9 65.3V83M79.9 4.8V21M79.9 65.3V83M83.8 4.8V31.5M83.8 55.7V83M87.8 4.8V21M87.8 65.3V83M91.7 4.8V21M91.7 65.3V83M95.6 4.8V21M95.6 65.3V83M99.6 4.8V21M99.6 65.3V83M103.5 4.8V25.8M103.5 61.6V83M107.5 4.8V21M107.5 65.3V83M111.4 4.8V21M111.4 65.3V83M115.4 4.8V21M115.4 65.3V83M119.3 4.8V21M119.3 65.3V83M123.2 4.8V31.5M123.2 55.7V83M127.2 4.8V21M127.2 65.3V83M131.1 4.8V21M131.1 65.3V83M135.1 4.8V21M135.1 65.3V83M139 4.8V21M139 65.3V83M143 4.8V25.8M143 61.6V83M146.9 4.8V21M146.9 65.3V83M150.8 4.8V21M150.8 65.3V83M154.8 4.8V21M154.8 65.3V83M158.7 4.8V21M158.7 65.3V83M162.7 4.8V31.5M162.7 55.7V83M166.6 4.8V21M166.6 65.3V83M170.5 4.8V21M170.5 65.3V83M174.5 4.8V21M174.5 65.3V83M178.4 4.8V21M178.4 65.3V83M182.4 4.8V25.8M182.4 61.6V83M186.3 4.8V21M186.3 65.3V83M190.3 4.8V21M190.3 65.3V83M194.2 4.8V21M194.2 65.3V83M198.1 4.8V21M198.1 65.3V83M202.1 4.8V31.5M202.1 55.7V83M206 4.8V21M206 65.3V83M210 4.8V21M210 65.3V83M213.9 4.8V21M213.9 65.3V83M217.8 4.8V21M217.8 65.3V83M221.8 4.8V25.8M221.8 61.6V83M225.7 4.8V21M225.7 65.3V83M229.7 4.8V21M229.7 65.3V83M233.6 4.8V21M233.6 65.3V83M237.6 4.8V21M237.6 65.3V83M241.5 4.8V31.5M241.5 55.7V83M245.4 4.8V21M245.4 65.3V83M249.4 4.8V21M249.4 65.3V83M253.3 4.8V21M253.3 65.3V83M257.3 4.8V21M257.3 65.3V83M261.2 4.8V25.8M261.2 61.6V83M265.2 4.8V21M265.2 65.3V83M269.1 4.8V21M269.1 65.3V83M273 4.8V21M273 65.3V83M277 4.8V21M277 65.3V83M280.9 4.8V31.5M280.9 55.7V83M284.9 4.8V21M284.9 65.3V83M288.8 4.8V21M288.8 65.3V83M292.7 4.8V21M292.7 65.3V83M296.7 4.8V21M296.7 65.3V83M300.6 4.8V25.8M300.6 61.6V83M304.6 4.8V21M304.6 65.3V83M308.5 4.8V21M308.5 65.3V83M312.5 4.8V21M312.5 65.3V83M316.4 4.8V21M316.4 65.3V83M320.3 4.8V31.5M320.3 55.7V83M324.3 4.8V21M324.3 65.3V83M328.2 4.8V21M328.2 65.3V83M332.2 4.8V21M332.2 65.3V83M336.1 4.8V21M336.1 65.3V83M340.1 4.8V25.8M340.1 61.6V83M344 4.8V21M344 65.3V83M347.9 4.8V21M347.9 65.3V83M351.9 4.8V21M351.9 65.3V83M355.8 4.8V21M355.8 65.3V83M359.8 4.8V31.5M359.8 55.7V83M363.7 4.8V21M363.7 65.3V83M367.6 4.8V21M367.6 65.3V83M371.6 4.8V21M371.6 65.3V83M375.5 4.8V21M375.5 65.3V83M379.5 4.8V25.8M379.5 61.6V83M383.4 4.8V21M383.4 65.3V83M387.4 4.8V21M387.4 65.3V83M391.3 4.8V21M391.3 65.3V83M395.2 4.8V21M395.2 65.3V83M399.2 4.8V31.5M399.2 55.7V83M403.1 4.8V21M403.1 65.3V83M407.1 4.8V21M407.1 65.3V83M411 4.8V21M411 65.3V83M414.9 4.8V21M414.9 65.3V83M418.9 4.8V25.8M418.9 61.6V83M422.8 4.8V21M422.8 65.3V83M426.8 4.8V21M426.8 65.3V83M430.7 4.8V21M430.7 65.3V83M434.7 4.8V21M434.7 65.3V83M438.6 4.8V31.5M438.6 55.7V83M442.5 4.8V21M442.5 65.3V83M446.5 4.8V21M446.5 65.3V83M450.4 4.8V21M450.4 65.3V83M454.4 4.8V21M454.4 65.3V83M458.3 4.8V25.8M458.3 61.6V83M462.3 4.8V21M462.3 65.3V83M466.2 4.8V21M466.2 65.3V83M470.1 4.8V21M470.1 65.3V83M474.1 4.8V21M474.1 65.3V83M478 4.8V31.5M478 55.7V83M482 4.8V21M482 65.3V83M485.9 4.8V21M485.9 65.3V83M489.8 4.8V21M489.8 65.3V83M493.8 4.8V21M493.8 65.3V83M497.7 4.8V25.8M497.7 61.6V83M501.7 4.8V21M501.7 65.3V83M505.6 4.8V21M505.6 65.3V83M509.6 4.8V21M509.6 65.3V83M513.5 4.8V21M513.5 65.3V83M517.4 4.8V31.5M517.4 55.7V83M521.4 4.8V21M521.4 65.3V83M525.3 4.8V21M525.3 65.3V83M529.3 4.8V21M529.3 65.3V83M533.2 4.8V21M533.2 65.3V83M537.1 4.8V25.8M537.1 61.6V83M541.1 4.8V21M541.1 65.3V83M545 4.8V21M545 65.3V83M549 4.8V21M549 65.3V83M552.9 4.8V21M552.9 65.3V83M556.9 4.8V31.5M556.9 55.7V83M560.8 4.8V21M560.8 65.3V83M564.7 4.8V21M564.7 65.3V83M568.7 4.8V21M568.7 65.3V83M572.6 4.8V21M572.6 65.3V83M576.6 4.8V25.8M576.6 61.6V83M580.5 4.8V21M580.5 65.3V83M584.5 4.8V21M584.5 65.3V83M588.4 4.8V21M588.4 65.3V83M592.3 4.8V21M592.3 65.3V83M596.3 4.8V31.5M596.3 55.7V83M600.2 4.8V21M600.2 65.3V83M604.2 4.8V21M604.2 65.3V83M608.1 4.8V21M608.1 65.3V83M612 4.8V21M612 65.3V83M616 4.8V25.8M616 61.6V83M619.9 4.8V21M619.9 65.3V83M623.9 4.8V21M623.9 65.3V83M627.8 4.8V21M627.8 65.3V83M631.8 4.8V21M631.8 65.3V83M635.7 4.8V31.5M635.7 55.7V83M639.6 4.8V21M639.6 65.3V83M643.6 4.8V21M643.6 65.3V83M647.5 4.8V21M647.5 65.3V83M651.5 4.8V21M651.5 65.3V83M655.4 4.8V25.8M655.4 61.6V83M659.4 4.8V21M659.4 65.3V83M663.3 4.8V21M663.3 65.3V83M667.2 4.8V21M667.2 65.3V83M671.2 4.8V21M671.2 65.3V83M675.1 4.8V31.5M675.1 55.7V83M679.1 4.8V21M679.1 65.3V83M683 4.8V21M683 65.3V83M686.9 4.8V21M686.9 65.3V83M690.9 4.8V21M690.9 65.3V83M694.8 4.8V25.8M694.8 61.6V83M698.8 4.8V21M698.8 65.3V83M702.7 4.8V21M702.7 65.3V83M706.7 4.8V21M706.7 65.3V83M710.6 4.8V21M710.6 65.3V83M714.5 4.8V31.5M714.5 55.7V83M718.5 4.8V21M718.5 65.3V83M722.4 4.8V21M722.4 65.3V83M726.4 4.8V21M726.4 65.3V83M730.3 4.8V21M730.3 65.3V83M734.2 4.8V25.8M734.2 61.6V83M738.2 4.8V21M738.2 65.3V83M742.1 4.8V21M742.1 65.3V83M746.1 4.8V21M746.1 65.3V83M750 4.8V21M750 65.3V83M754 4.8V31.5M754 55.7V83M757.9 4.8V21M757.9 65.3V83M761.8 4.8V21M761.8 65.3V83M765.8 4.8V21M765.8 65.3V83M769.7 4.8V21M769.7 65.3V83M773.7 4.8V25.8M773.7 61.6V83M777.6 4.8V21M777.6 65.3V83M781.6 4.8V21M781.6 65.3V83M785.5 4.8V21M785.5 65.3V83M789.4 4.8V21M789.4 65.3V83M793.4 4.8V31.5M793.4 55.7V83M797.3 4.8V21M797.3 65.3V83M801.3 4.8V21M801.3 65.3V83M805.2 4.8V21M805.2 65.3V83M809.1 4.8V21M809.1 65.3V83M813.1 4.8V25.8M813.1 61.6V83M817 4.8V21M817 65.3V83M821 4.8V21M821 65.3V83M824.9 4.8V21M824.9 65.3V83M828.9 4.8V21M828.9 65.3V83M832.8 4.8V31.5M832.8 55.7V83M836.7 4.8V21M836.7 65.3V83M840.7 4.8V21M840.7 65.3V83M844.6 4.8V21M844.6 65.3V83M848.6 4.8V21M848.6 65.3V83M852.5 4.8V25.8M852.5 61.6V83M856.5 4.8V21M856.5 65.3V83M860.4 4.8V21M860.4 65.3V83M864.3 4.8V21M864.3 65.3V83M868.3 4.8V21M868.3 65.3V83M872.2 4.8V31.5M872.2 55.7V83M876.2 4.8V21M876.2 65.3V83M880.1 4.8V21M880.1 65.3V83M884 4.8V21M884 65.3V83M888 4.8V21M888 65.3V83M891.9 4.8V25.8M891.9 61.6V83M895.9 4.8V21M895.9 65.3V83M899.8 4.8V21M899.8 65.3V83M903.8 4.8V21M903.8 65.3V83M907.7 4.8V21M907.7 65.3V83M911.6 4.8V31.5M911.6 55.7V83M915.6 4.8V21M915.6 65.3V83M919.5 4.8V21M919.5 65.3V83M923.5 4.8V21M923.5 65.3V83M927.4 4.8V21M927.4 65.3V83M931.4 4.8V25.8M931.4 61.6V83M935.3 4.8V21M935.3 65.3V83M939.2 4.8V21M939.2 65.3V83M943.2 4.8V21M943.2 65.3V83M947.1 4.8V21M947.1 65.3V83M951.1 4.8V31.5M951.1 55.7V83M955 4.8V21M955 65.3V83M958.9 4.8V21M958.9 65.3V83M962.9 4.8V21M962.9 65.3V83M966.8 4.8V21M966.8 65.3V83M970.8 4.8V25.8M970.8 61.6V83M974.7 4.8V21M974.7 65.3V83M978.7 4.8V21M978.7 65.3V83M982.6 4.8V21M982.6 65.3V83M986.5 4.8V21M986.5 65.3V83M990.5 4.8V31.5M990.5 55.7V83M994.4 4.8V21M994.4 65.3V83M998.4 4.8V21M998.4 65.3V83M1002.3 4.8V21M1002.3 65.3V83M1006.2 4.8V21M1006.2 65.3V83M1010.2 4.8V25.8M1010.2 61.6V83M1014.1 4.8V21M1014.1 65.3V83M1018.1 4.8V21M1018.1 65.3V83M1022 4.8V21M1022 65.3V83M1026 4.8V21M1026 65.3V83M1029.9 4.8V31.5M1029.9 55.7V83M1033.8 4.8V21M1033.8 65.3V83M1037.8 4.8V21M1037.8 65.3V83M1041.7 4.8V21M1041.7 65.3V83M1045.7 4.8V21M1045.7 65.3V83M1049.6 4.8V25.8M1049.6 61.6V83M1053.6 4.8V21M1053.6 65.3V83M1057.5 4.8V21M1057.5 65.3V83M1061.4 4.8V21M1061.4 65.3V83M1065.4 4.8V21M1065.4 65.3V83M1069.3 4.8V31.5M1069.3 55.7V83M1073.3 4.8V21M1073.3 65.3V83M1077.2 4.8V21M1077.2 65.3V83M1081.1 4.8V21M1081.1 65.3V83M1085.1 4.8V21M1085.1 65.3V83M1089 4.8V25.8M1089 61.6V83M1093 4.8V21M1093 65.3V83M1096.9 4.8V21M1096.9 65.3V83M1100.9 4.8V21M1100.9 65.3V83M1104.8 4.8V21M1104.8 65.3V83M1108.7 4.8V31.5M1108.7 55.7V83M1112.7 4.8V21M1112.7 65.3V83M1116.6 4.8V21M1116.6 65.3V83M1120.6 4.8V21M1120.6 65.3V83M1124.5 4.8V21M1124.5 65.3V83M1128.5 4.8V25.8M1128.5 61.6V83M1132.4 4.8V21M1132.4 65.3V83M1136.3 4.8V21M1136.3 65.3V83M1140.3 4.8V21M1140.3 65.3V83M1144.2 4.8V21M1144.2 65.3V83M1148.2 4.8V31.5M1148.2 55.7V83M1152.1 4.8V21M1152.1 65.3V83M1156 4.8V21M1156 65.3V83M1160 4.8V21M1160 65.3V83M1163.9 4.8V21M1163.9 65.3V83M1167.9 4.8V25.8M1167.9 61.6V83M1171.8 4.8V21M1171.8 65.3V83M1175.8 4.8V21M1175.8 65.3V83M1179.7 4.8V21M1179.7 65.3V83M1183.6 4.8V21M1183.6 65.3V83M1187.6 4.8V31.5M1187.6 55.7V83M1191.5 4.8V21M1191.5 65.3V83M1195.5 4.8V21M1195.5 65.3V83M1199.4 4.8V21M1199.4 65.3V83M1203.3 4.8V21M1203.3 65.3V83M1207.3 4.8V25.8M1207.3 61.6V83M1211.2 4.8V21M1211.2 65.3V83M1215.2 4.8V21M1215.2 65.3V83M1219.1 4.8V21M1219.1 65.3V83M1223.1 4.8V21M1223.1 65.3V83M1227 4.8V31.5M1227 55.7V83M1230.9 4.8V21M1230.9 65.3V83M1234.9 4.8V21M1234.9 65.3V83M1238.8 4.8V21M1238.8 65.3V83M1242.8 4.8V21M1242.8 65.3V83M1246.7 4.8V25.8M1246.7 61.6V83M1250.7 4.8V21M1250.7 65.3V83M1254.6 4.8V21M1254.6 65.3V83M1258.5 4.8V21M1258.5 65.3V83M1262.5 4.8V21M1262.5 65.3V83M1266.4 4.8V31.5M1266.4 55.7V83M1270.4 4.8V21M1270.4 65.3V83M1274.3 4.8V21M1274.3 65.3V83M1278.2 4.8V21M1278.2 65.3V83M1282.2 4.8V21M1282.2 65.3V83M1286.1 4.8V25.8M1286.1 61.6V83M1290.1 4.8V21M1290.1 65.3V83M1294 4.8V21M1294 65.3V83M1298 4.8V21M1298 65.3V83M1301.9 4.8V21M1301.9 65.3V83M1305.8 4.8V31.5M1305.8 55.7V83M1309.8 4.8V21M1309.8 65.3V83M1313.7 4.8V21M1313.7 65.3V83M1317.7 4.8V21M1317.7 65.3V83M1321.6 4.8V21M1321.6 65.3V83M1325.6 4.8V25.8M1325.6 61.6V83M1329.5 4.8V21M1329.5 65.3V83M1333.4 4.8V21M1333.4 65.3V83M1337.4 4.8V21M1337.4 65.3V83M1341.3 4.8V21M1341.3 65.3V83M1345.3 4.8V31.5M1345.3 55.7V83M1349.2 4.8V21M1349.2 65.3V83M1353.1 4.8V21M1353.1 65.3V83M1357.1 4.8V21M1357.1 65.3V83M1361 4.8V21M1361 65.3V83M1365 4.8V25.8M1365 61.6V83M1368.9 4.8V21M1368.9 65.3V83M1372.9 4.8V21M1372.9 65.3V83M1376.8 4.8V21M1376.8 65.3V83M1380.7 4.8V21M1380.7 65.3V83M1384.7 4.8V31.5M1384.7 55.7V83M1388.6 4.8V21M1388.6 65.3V83M1392.6 4.8V21M1392.6 65.3V83M1396.5 4.8V21M1396.5 65.3V83M1400.4 4.8V21M1400.4 65.3V83M1404.4 4.8V25.8M1404.4 61.6V83M1408.3 4.8V21M1408.3 65.3V83M1412.3 4.8V21M1412.3 65.3V83M1416.2 4.8V21M1416.2 65.3V83M1420.2 4.8V21M1420.2 65.3V83M1424.1 4.8V31.5M1424.1 55.7V83M1428 4.8V21M1428 65.3V83M1432 4.8V21M1432 65.3V83M1435.9 4.8V21M1435.9 65.3V83M1439.9 4.8V21M1439.9 65.3V83M1443.8 4.8V25.8M1443.8 61.6V83M1447.8 4.8V21M1447.8 65.3V83M1451.7 4.8V21M1451.7 65.3V83M1455.6 4.8V21M1455.6 65.3V83M1459.6 4.8V21M1459.6 65.3V83M1463.5 4.8V31.5M1463.5 55.7V83M1467.5 4.8V21M1467.5 65.3V83M1471.4 4.8V21M1471.4 65.3V83M1475.3 4.8V21M1475.3 65.3V83M1479.3 4.8V21M1479.3 65.3V83M1483.2 4.8V25.8M1483.2 61.6V83M1487.2 4.8V21M1487.2 65.3V83M1491.1 4.8V21M1491.1 65.3V83M1495.1 4.8V21M1495.1 65.3V83M1499 4.8V21M1499 65.3V83" stroke="#3a3a3a" stroke-width="1.05" fill="none"/><g font-family="&quot;Liberation Sans&quot;, sans-serif"><text x="83.8" y="51.2" font-size="22.5" fill="#0c0c0c" stroke="#0c0c0c" stroke-width="0.8" text-anchor="middle" transform="translate(84.4 0) scale(0.6 1) translate(-83.8 0)">2</text><text x="123.2" y="51.2" font-size="22.5" fill="#0c0c0c" stroke="#0c0c0c" stroke-width="0.8" text-anchor="middle" transform="translate(123.8 0) scale(0.6 1) translate(-123.2 0)">3</text><text x="162.7" y="51.2" font-size="22.5" fill="#0c0c0c" stroke="#0c0c0c" stroke-width="0.8" text-anchor="middle" transform="translate(163.3 0) scale(0.6 1) translate(-162.7 0)">4</text><text x="202.1" y="51.2" font-size="22.5" fill="#0c0c0c" stroke="#0c0c0c" stroke-width="0.8" text-anchor="middle" transform="translate(202.7 0) scale(0.6 1) translate(-202.1 0)">5</text><text x="241.5" y="51.2" font-size="22.5" fill="#0c0c0c" stroke="#0c0c0c" stroke-width="0.8" text-anchor="middle" transform="translate(242.1 0) scale(0.6 1) translate(-241.5 0)">6</text><text x="280.9" y="51.2" font-size="22.5" fill="#0c0c0c" stroke="#0c0c0c" stroke-width="0.8" text-anchor="middle" transform="translate(281.5 0) scale(0.6 1) translate(-280.9 0)">7</text><text x="320.3" y="51.2" font-size="22.5" fill="#0c0c0c" stroke="#0c0c0c" stroke-width="0.8" text-anchor="middle" transform="translate(320.9 0) scale(0.6 1) translate(-320.3 0)">8</text><text x="359.8" y="51.2" font-size="22.5" fill="#0c0c0c" stroke="#0c0c0c" stroke-width="0.8" text-anchor="middle" transform="translate(360.4 0) scale(0.6 1) translate(-359.8 0)">9</text><circle cx="399.5" cy="44" r="15.2" fill="#050505"/><text x="399.2" y="52.8" font-size="27" font-weight="bold" fill="#fff" text-anchor="middle" transform="translate(399.8 0) scale(0.6 1) translate(-399.2 0)">10</text><text x="438.6" y="51.2" font-size="22.5" fill="#0c0c0c" stroke="#0c0c0c" stroke-width="0.8" text-anchor="middle" transform="translate(439.2 0) scale(0.6 1) translate(-438.6 0)">11</text><text x="478" y="51.2" font-size="22.5" fill="#0c0c0c" stroke="#0c0c0c" stroke-width="0.8" text-anchor="middle" transform="translate(478.6 0) scale(0.6 1) translate(-478 0)">12</text><text x="517.4" y="51.2" font-size="22.5" fill="#0c0c0c" stroke="#0c0c0c" stroke-width="0.8" text-anchor="middle" transform="translate(518 0) scale(0.6 1) translate(-517.4 0)">13</text><text x="556.9" y="51.2" font-size="22.5" fill="#0c0c0c" stroke="#0c0c0c" stroke-width="0.8" text-anchor="middle" transform="translate(557.5 0) scale(0.6 1) translate(-556.9 0)">14</text><text x="596.3" y="51.2" font-size="22.5" fill="#0c0c0c" stroke="#0c0c0c" stroke-width="0.8" text-anchor="middle" transform="translate(596.9 0) scale(0.6 1) translate(-596.3 0)">15</text><text x="635.7" y="51.2" font-size="22.5" fill="#0c0c0c" stroke="#0c0c0c" stroke-width="0.8" text-anchor="middle" transform="translate(636.3 0) scale(0.6 1) translate(-635.7 0)">16</text><text x="675.1" y="51.2" font-size="22.5" fill="#0c0c0c" stroke="#0c0c0c" stroke-width="0.8" text-anchor="middle" transform="translate(675.7 0) scale(0.6 1) translate(-675.1 0)">17</text><text x="714.5" y="51.2" font-size="22.5" fill="#0c0c0c" stroke="#0c0c0c" stroke-width="0.8" text-anchor="middle" transform="translate(715.1 0) scale(0.6 1) translate(-714.5 0)">18</text><text x="754" y="51.2" font-size="22.5" fill="#0c0c0c" stroke="#0c0c0c" stroke-width="0.8" text-anchor="middle" transform="translate(754.6 0) scale(0.6 1) translate(-754 0)">19</text><circle cx="793.7" cy="44" r="15.2" fill="#050505"/><text x="793.4" y="52.8" font-size="27" font-weight="bold" fill="#fff" text-anchor="middle" transform="translate(794 0) scale(0.6 1) translate(-793.4 0)">20</text><text x="832.8" y="51.2" font-size="22.5" fill="#0c0c0c" stroke="#0c0c0c" stroke-width="0.8" text-anchor="middle" transform="translate(833.4 0) scale(0.6 1) translate(-832.8 0)">21</text><text x="872.2" y="51.2" font-size="22.5" fill="#0c0c0c" stroke="#0c0c0c" stroke-width="0.8" text-anchor="middle" transform="translate(872.8 0) scale(0.6 1) translate(-872.2 0)">22</text><text x="911.6" y="51.2" font-size="22.5" fill="#0c0c0c" stroke="#0c0c0c" stroke-width="0.8" text-anchor="middle" transform="translate(912.2 0) scale(0.6 1) translate(-911.6 0)">23</text><text x="951.1" y="51.2" font-size="22.5" fill="#0c0c0c" stroke="#0c0c0c" stroke-width="0.8" text-anchor="middle" transform="translate(951.7 0) scale(0.6 1) translate(-951.1 0)">24</text><text x="990.5" y="51.2" font-size="22.5" fill="#0c0c0c" stroke="#0c0c0c" stroke-width="0.8" text-anchor="middle" transform="translate(991.1 0) scale(0.6 1) translate(-990.5 0)">25</text><text x="1029.9" y="51.2" font-size="22.5" fill="#0c0c0c" stroke="#0c0c0c" stroke-width="0.8" text-anchor="middle" transform="translate(1030.5 0) scale(0.6 1) translate(-1029.9 0)">26</text><text x="1069.3" y="51.2" font-size="22.5" fill="#0c0c0c" stroke="#0c0c0c" stroke-width="0.8" text-anchor="middle" transform="translate(1069.9 0) scale(0.6 1) translate(-1069.3 0)">27</text><text x="1108.7" y="51.2" font-size="22.5" fill="#0c0c0c" stroke="#0c0c0c" stroke-width="0.8" text-anchor="middle" transform="translate(1109.3 0) scale(0.6 1) translate(-1108.7 0)">28</text><text x="1148.2" y="51.2" font-size="22.5" fill="#0c0c0c" stroke="#0c0c0c" stroke-width="0.8" text-anchor="middle" transform="translate(1148.8 0) scale(0.6 1) translate(-1148.2 0)">29</text><circle cx="1187.9" cy="44" r="15.2" fill="#050505"/><text x="1187.6" y="52.8" font-size="27" font-weight="bold" fill="#fff" text-anchor="middle" transform="translate(1188.2 0) scale(0.6 1) translate(-1187.6 0)">30</text><text x="1227" y="51.2" font-size="22.5" fill="#0c0c0c" stroke="#0c0c0c" stroke-width="0.8" text-anchor="middle" transform="translate(1227.6 0) scale(0.6 1) translate(-1227 0)">31</text><text x="1266.4" y="51.2" font-size="22.5" fill="#0c0c0c" stroke="#0c0c0c" stroke-width="0.8" text-anchor="middle" transform="translate(1267 0) scale(0.6 1) translate(-1266.4 0)">32</text><text x="1305.8" y="51.2" font-size="22.5" fill="#0c0c0c" stroke="#0c0c0c" stroke-width="0.8" text-anchor="middle" transform="translate(1306.4 0) scale(0.6 1) translate(-1305.8 0)">33</text><text x="1345.3" y="51.2" font-size="22.5" fill="#0c0c0c" stroke="#0c0c0c" stroke-width="0.8" text-anchor="middle" transform="translate(1345.9 0) scale(0.6 1) translate(-1345.3 0)">34</text><text x="1384.7" y="51.2" font-size="22.5" fill="#0c0c0c" stroke="#0c0c0c" stroke-width="0.8" text-anchor="middle" transform="translate(1385.3 0) scale(0.6 1) translate(-1384.7 0)">35</text><text x="1424.1" y="51.2" font-size="22.5" fill="#0c0c0c" stroke="#0c0c0c" stroke-width="0.8" text-anchor="middle" transform="translate(1424.7 0) scale(0.6 1) translate(-1424.1 0)">36</text><text x="1463.5" y="51.2" font-size="22.5" fill="#0c0c0c" stroke="#0c0c0c" stroke-width="0.8" text-anchor="middle" transform="translate(1464.1 0) scale(0.6 1) translate(-1463.5 0)">37</text><text x="1502.9" y="51.2" font-size="22.5" fill="#0c0c0c" stroke="#0c0c0c" stroke-width="0.8" text-anchor="middle" transform="translate(1503.5 0) scale(0.6 1) translate(-1502.9 0)">38</text></g><defs><linearGradient id="bar" x1="0" y1="0" x2="0" y2="1"><stop offset="0" stop-color="#8a8a8a"/><stop offset="0.55" stop-color="#9c9c9c"/><stop offset="0.85" stop-color="#d8d8d8"/><stop offset="0.93" stop-color="#7a7a7a"/><stop offset="1" stop-color="#c8c8c8"/></linearGradient><linearGradient id="hook2" x1="0" y1="0" x2="0" y2="1"><stop offset="0" stop-color="#8c8c8c" stop-opacity="0.95"/><stop offset="0.55" stop-color="#9a9a9a" stop-opacity="0.95"/><stop offset="1" stop-color="#e0e0e0" stop-opacity="0"/></linearGradient></defs><rect x="0" y="0" width="5" height="83" fill="url(#bar)"/><path d="M5 10 C15 11 27 15 38 21 C48 26 56 31 58.5 38 C59.5 43 59 49 58 54 L5 54 Z" fill="url(#hook2)"/><circle cx="16.3" cy="43.3" r="6" fill="url(#riv)"/><circle cx="40.7" cy="43.3" r="6" fill="url(#riv)"/><rect x="0" y="82" width="1500" height="1.2" fill="#d9d9d9"/></svg></body></html>
